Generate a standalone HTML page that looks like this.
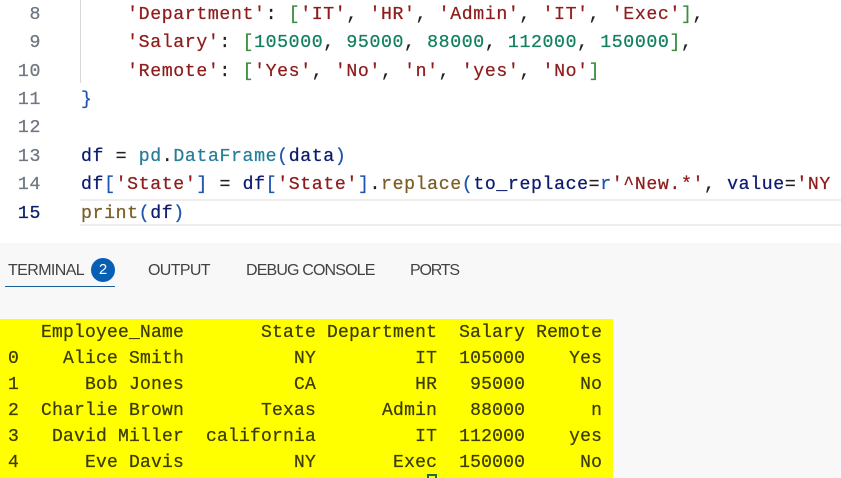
<!DOCTYPE html>
<html><head><meta charset="utf-8">
<style>
html,body{margin:0;padding:0;background:#fff;}
#root{position:relative;width:841px;height:478px;overflow:hidden;background:#fff;}
.m{position:absolute;white-space:pre;font-family:"Liberation Mono",monospace;-webkit-text-stroke:.25px currentColor;}
.c{font-size:18.2px;letter-spacing:.62px;height:28px;line-height:28px;left:81px;color:#3b3b3b;}
.n{font-size:18.2px;letter-spacing:.62px;height:28px;line-height:28px;right:800px;color:#6e7681;}
.t{font-size:18px;letter-spacing:.2px;left:8px;height:26px;line-height:26px;color:#3d3d00;}
.s{color:#8f1c1c}.d{color:#128060}.g{color:#3a8f3f}.b{color:#1f55b0}.v{color:#0c1a70}.k{color:#267f99}.f{color:#795e26}.p{color:#222}
.tab{position:absolute;top:261px;height:20px;line-height:20px;font-family:"Liberation Sans",sans-serif;font-size:16px;letter-spacing:-.85px;color:#424242;white-space:pre;}
</style></head>
<body><div id="root">
<div style="position:absolute;left:80px;top:0;width:1px;height:83px;background:#d8d8d8"></div>
<div style="position:absolute;left:80px;top:199px;width:761px;height:27px;box-sizing:border-box;border-top:2px solid #eeeeee;border-bottom:2px solid #eeeeee"></div>

<div class="m n" style="top:1px">8</div>
<div class="m n" style="top:29px">9</div>
<div class="m n" style="top:58px">10</div>
<div class="m n" style="top:86px">11</div>
<div class="m n" style="top:114px">12</div>
<div class="m n" style="top:143px">13</div>
<div class="m n" style="top:171px">14</div>
<div class="m n" style="top:200px;color:#0b216f">15</div>

<div class="m c" style="top:1px">    <span class="s">'Department'</span><span class="p">:</span> <span class="g">[</span><span class="s">'IT'</span><span class="p">,</span> <span class="s">'HR'</span><span class="p">,</span> <span class="s">'Admin'</span><span class="p">,</span> <span class="s">'IT'</span><span class="p">,</span> <span class="s">'Exec'</span><span class="g">]</span><span class="p">,</span></div>
<div class="m c" style="top:29px">    <span class="s">'Salary'</span><span class="p">:</span> <span class="g">[</span><span class="d">105000</span><span class="p">,</span> <span class="d">95000</span><span class="p">,</span> <span class="d">88000</span><span class="p">,</span> <span class="d">112000</span><span class="p">,</span> <span class="d">150000</span><span class="g">]</span><span class="p">,</span></div>
<div class="m c" style="top:58px">    <span class="s">'Remote'</span><span class="p">:</span> <span class="g">[</span><span class="s">'Yes'</span><span class="p">,</span> <span class="s">'No'</span><span class="p">,</span> <span class="s">'n'</span><span class="p">,</span> <span class="s">'yes'</span><span class="p">,</span> <span class="s">'No'</span><span class="g">]</span></div>
<div class="m c" style="top:86px"><span class="b">}</span></div>
<div class="m c" style="top:143px"><span class="v">df</span> <span class="p">=</span> <span class="k">pd</span><span class="p">.</span><span class="k">DataFrame</span><span class="b">(</span><span class="v">data</span><span class="b">)</span></div>
<div class="m c" style="top:171px"><span class="v">df</span><span class="b">[</span><span class="s">'State'</span><span class="b">]</span> <span class="p">=</span> <span class="v">df</span><span class="b">[</span><span class="s">'State'</span><span class="b">]</span><span class="p">.</span><span class="f">replace</span><span class="b">(</span><span class="v">to_replace</span><span class="p">=</span><span class="b">r</span><span class="s">'^New.*'</span><span class="p">,</span> <span class="v">value</span><span class="p">=</span><span class="s">'NY</span></div>
<div class="m c" style="top:200px"><span class="f">print</span><span class="b">(</span><span class="v">df</span><span class="b">)</span></div>

<div style="position:absolute;left:0;top:243px;width:841px;height:235px;background:#f8f8f8"></div>
<div class="tab" style="left:8px;letter-spacing:-.6px">TERMINAL</div>
<div style="position:absolute;left:91px;top:258px;width:24px;height:24px;border-radius:50%;background:#075fb5;color:#fff;font:15px/24px 'Liberation Sans',sans-serif;text-align:center">2</div>
<div style="position:absolute;left:5px;top:286px;width:110px;height:1px;background:#1a5f96"></div>
<div class="tab" style="left:148px;letter-spacing:-.65px">OUTPUT</div>
<div class="tab" style="left:246px">DEBUG CONSOLE</div>
<div class="tab" style="left:410px;letter-spacing:-1.2px">PORTS</div>

<div style="position:absolute;left:0;top:319px;width:613px;height:159px;background:#ffff00"></div>
<div class="m t" style="top:320px">   Employee_Name       State Department  Salary Remote</div>
<div class="m t" style="top:346px">0    Alice Smith          NY         IT  105000    Yes</div>
<div class="m t" style="top:372px">1      Bob Jones          CA         HR   95000     No</div>
<div class="m t" style="top:398px">2  Charlie Brown       Texas      Admin   88000      n</div>
<div class="m t" style="top:424px">3   David Miller  california         IT  112000    yes</div>
<div class="m t" style="top:450px">4      Eve Davis          NY       Exec  150000     No</div>
<div style="position:absolute;left:427px;top:474px;width:10px;height:6px;box-sizing:border-box;border:2px solid #1f6f3a;"></div>
</div></body></html>
